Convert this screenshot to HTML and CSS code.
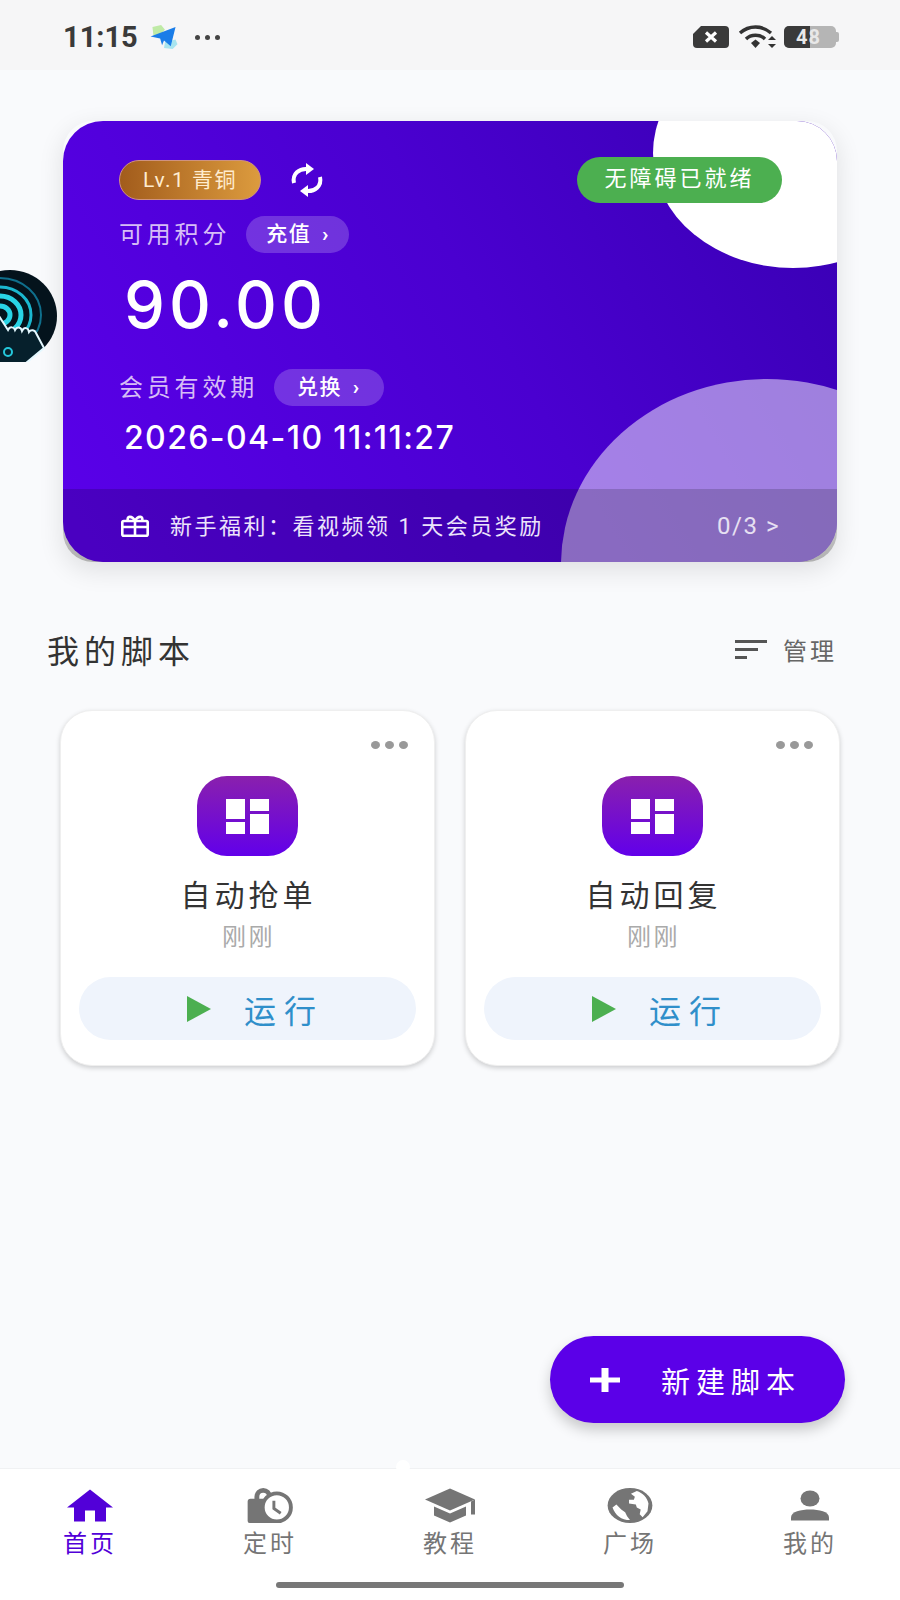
FILE: index.html
```html
<!DOCTYPE html>
<html lang="zh">
<head>
    <meta charset="utf-8">
    <title>我的脚本</title>
    <link rel="stylesheet" href="styles.css">
</head>
<body>

<div class="phone">

    <div class="status-bar">
        <div class="status-left">
            <span class="status-time">11:15</span>
            <svg class="status-app" viewBox="0 0 30 26">
                <path d="M3 2 L12 0 L16 5 L8 13 L4 11 Z" fill="#bfeaa6"/>
                <path d="M16 18 L27 15 L29 20 L24 25 L15 24 Z" fill="#a8e4ef"/>
                <path d="M1 12 L27 2 L22 22 L15 16 L13 21 L11 14 Z" fill="#1a7de8"/>
            </svg>
            <span class="status-dots"><i></i><i></i><i></i></span>
        </div>
        <div class="status-right">
            <svg class="status-sim" viewBox="0 0 36 22">
                <path d="M8 0 H32 A4 4 0 0 1 36 4 V18 A4 4 0 0 1 32 22 H4 A4 4 0 0 1 0 18 V8 Z" fill="#3a3a3a"/>
                <path d="M13 6.500 L23 15.500 M23 6.500 L13 15.500" stroke="#fff" stroke-width="3.200"/>
            </svg>
            <svg class="status-wifi" viewBox="0 0 38 24">
                <path d="M2 8 C11 0 24 0 33 8" fill="none" stroke="#333" stroke-width="3.400"/>
                <path d="M8 14 C13 9 22 9 27 14" fill="none" stroke="#333" stroke-width="3.400"/>
                <path d="M13 18 L17.500 14.500 L22 18 L17.500 23 Z" fill="#333"/>
                <path d="M30 15 L34 11 L38 15 Z M30 19 L34 23 L38 19 Z" fill="#333"/>
            </svg>
            <div class="battery">
                <div class="battery-fill"></div>
                <span class="battery-num">48</span>
                <div class="battery-cap"></div>
            </div>
        </div>
    </div>

    <div class="main">
        <div class="hero-shell">
            <div class="hero">
                <div class="blob blob-white"></div>
                <div class="blob blob-violet"></div>

                <div class="hero-body">
                    <div class="hero-top">
                        <span class="level-pill">Lv.1 青铜</span>
                        <svg class="refresh-icon" viewBox="0 0 36 36" fill="none" stroke="#fff" stroke-width="4">
                            <path d="M5 21 C3 12 10 6 19 7"/>
                            <path d="M31 15 C33 24 26 30 17 29"/>
                            <path d="M17 1 L25 7 L17 13 Z" fill="#fff" stroke="none"/>
                            <path d="M19 23 L11 29 L19 35 Z" fill="#fff" stroke="none"/>
                        </svg>
                        <span class="ready-pill">无障碍已就绪</span>
                    </div>

                    <div class="hero-row hero-row-points">
                        <span class="hero-label">可用积分</span>
                        <span class="hero-action">充值 <b>›</b></span>
                    </div>
                    <div class="points">90.00</div>

                    <div class="hero-row hero-row-vip">
                        <span class="hero-label">会员有效期</span>
                        <span class="hero-action">兑换 <b>›</b></span>
                    </div>
                    <div class="expire">2026-04-10 11:11:27</div>
                </div>

                <div class="welfare">
                    <svg class="gift-icon" viewBox="0 0 28 22" fill="none" stroke="#fff" stroke-width="2.600">
                        <rect x="1.300" y="6" width="25.400" height="14.700" rx="1.500"/>
                        <path d="M1.300 12 H26.700 M14 6 V21"/>
                        <path d="M7 6 C5 1 11 0 14 6 C17 0 23 1 21 6"/>
                    </svg>
                    <span class="welfare-text">新手福利：看视频领 1 天会员奖励</span>
                    <span class="welfare-count">0/3 &gt;</span>
                </div>
            </div>
        </div>

        <div class="section-head">
            <h2>我的脚本</h2>
            <div class="manage">
                <svg class="manage-icon" viewBox="0 0 32 19" fill="#555">
                    <rect x="0" y="0" width="32" height="3"/>
                    <rect x="0" y="8" width="23" height="3"/>
                    <rect x="0" y="16" width="12" height="3"/>
                </svg>
                <span>管理</span>
            </div>
        </div>

        <div class="script-list">
            <div class="script-card">
                <div class="card-more"><i></i><i></i><i></i></div>
                <div class="script-icon">
                    <svg viewBox="0 0 43 35" fill="#fff">
                        <rect x="0" y="0" width="19" height="20"/>
                        <rect x="24" y="0" width="19" height="12"/>
                        <rect x="0" y="23" width="19" height="12"/>
                        <rect x="24" y="15" width="19" height="20"/>
                    </svg>
                </div>
                <div class="script-name">自动抢单</div>
                <div class="script-time">刚刚</div>
                <div class="run-btn">
                    <svg class="play-icon" viewBox="0 0 24 26"><path d="M0 0 L24 13 L0 26 Z" fill="#4caf50"/></svg>
                    <span>运行</span>
                </div>
            </div>
            <div class="script-card">
                <div class="card-more"><i></i><i></i><i></i></div>
                <div class="script-icon">
                    <svg viewBox="0 0 43 35" fill="#fff">
                        <rect x="0" y="0" width="19" height="20"/>
                        <rect x="24" y="0" width="19" height="12"/>
                        <rect x="0" y="23" width="19" height="12"/>
                        <rect x="24" y="15" width="19" height="20"/>
                    </svg>
                </div>
                <div class="script-name">自动回复</div>
                <div class="script-time">刚刚</div>
                <div class="run-btn">
                    <svg class="play-icon" viewBox="0 0 24 26"><path d="M0 0 L24 13 L0 26 Z" fill="#4caf50"/></svg>
                    <span>运行</span>
                </div>
            </div>
        </div>
    </div>

    <div class="tab-bar">
        <div class="tab tab-active">
            <svg class="tab-icon" viewBox="0 0 46 34">
                <path d="M23 1 L46 19 H39 V33 H28 V22 H18 V33 H7 V19 H0 Z" fill="currentColor"/>
            </svg>
            <span>首页</span>
        </div>
        <div class="tab">
            <svg class="tab-icon" viewBox="0 0 46 36">
                <path d="M2 36 A2 2 0 0 1 0 34 V14 A3 3 0 0 1 3 11 H7 V9 A9 9 0 0 1 25 9 V11 H20 V9 A4 4 0 0 0 12 9 V11 H26 V36 Z" fill="currentColor"/>
                <circle cx="30" cy="20" r="14.500" fill="#fff" stroke="currentColor" stroke-width="4"/>
                <path d="M27 13 V21 L34 26" fill="none" stroke="currentColor" stroke-width="3"/>
            </svg>
            <span>定时</span>
        </div>
        <div class="tab">
            <svg class="tab-icon tab-icon-hat" viewBox="0 0 50 34">
                <path d="M25 0 L50 11 L25 22 L0 11 Z" fill="currentColor"/>
                <path d="M9 18 L25 25 L41 18 V27 L25 34 L9 27 Z" fill="currentColor"/>
                <path d="M46 13 L50 11 V26 H46 Z" fill="currentColor"/>
            </svg>
            <span>教程</span>
        </div>
        <div class="tab">
            <svg class="tab-icon" viewBox="0 0 46 36">
                <ellipse cx="23" cy="18" rx="23" ry="18" fill="currentColor"/>
                <path d="M22 12 L27 12 L28 9 L24 6 L30 3 C36 5 41 10 42 16 L41 24 L36 30 L33 27 L34 22 L30 20 L29 17 L22 16 Z" fill="#fff"/>
                <path d="M5 20 L9 17 L14 22 L18 25 L20 29 L23 33 C14 33 8 28 5 20 Z" fill="#fff"/>
            </svg>
            <span>广场</span>
        </div>
        <div class="tab">
            <svg class="tab-icon tab-icon-user" viewBox="0 0 38 30">
                <ellipse cx="19" cy="8" rx="9.500" ry="8" fill="currentColor"/>
                <path d="M0 30 V27 C0 21 10 19 19 19 C28 19 38 21 38 27 V30 Z" fill="currentColor"/>
            </svg>
            <span>我的</span>
        </div>
        <div class="home-bar"></div>
    </div>

    <!-- 悬浮的东西 -->
    <svg class="float-ball" viewBox="0 0 60 92">
        <ellipse cx="10" cy="46" rx="47" ry="46" fill="#04131c"/>
        <g fill="none">
            <ellipse cx="0" cy="45" rx="41" ry="37" stroke="#0f6f8c" stroke-width="2"/>
            <ellipse cx="0" cy="45" rx="31" ry="28" stroke="#1bb8d0" stroke-width="3"/>
            <ellipse cx="0" cy="45" rx="21" ry="19" stroke="#29d4e6" stroke-width="5"/>
            <ellipse cx="0" cy="45" rx="10" ry="9" stroke="#29d4e6" stroke-width="5"/>
        </g>
        <path d="M-5 40 L8 60 C10 56 14 57 15 60 C17 56 21 57 22 61 C24 57 28 57 29 62 C31 59 35 60 36 63 L44 78 L26 93 L-5 93 Z" fill="#06202c" stroke="#e4f8ff" stroke-width="2"/>
        <circle cx="8" cy="82" r="4" fill="none" stroke="#25c8dc" stroke-width="2"/>
    </svg>

    <div class="tab-bump"></div>

    <div class="fab">
        <svg class="fab-plus" viewBox="0 0 30 24"><path d="M0 9.500 H11.500 V0 H18.500 V9.500 H30 V14.500 H18.500 V24 H11.500 V14.500 H0 Z" fill="#fff"/></svg>
        <span>新建脚本</span>
    </div>
</div>

</body>
</html>
```

FILE: styles.css
```css
* {
    box-sizing: border-box;
}
html, body {
    margin: 0;
    padding: 0;
}
body {
    font-family: Roboto, "Noto Sans CJK SC", sans-serif;
    background-color: #f9fafc;
}
.phone {
    position: relative;
    width: 900px;
    height: 1600px;
    overflow: hidden;
    display: flex;
    flex-direction: column;
    background-color: #f9fafc;
}

/* 状态栏 */
.status-bar {
    height: 70px;
    flex-shrink: 0;
    display: flex;
    justify-content: space-between;
    align-items: center;
    padding: 4px 64px 0 63px;
    background-color: #f6f6f7;
}
.status-left, .status-right {
    display: flex;
    align-items: center;
}
.status-time {
    font-size: 29px;
    font-weight: 700;
    letter-spacing: 0;
    color: #3a3a3a;
}
.status-app {
    width: 30px;
    height: 25px;
    margin-left: 11px;
}
.status-dots {
    display: flex;
    gap: 5px;
    margin-left: 16px;
}
.status-dots i {
    width: 5px;
    height: 5px;
    border-radius: 50%;
    background-color: #444;
}
.status-sim {
    width: 36px;
    height: 22px;
}
.status-wifi {
    width: 38px;
    height: 24px;
    margin-left: 9px;
}
.battery {
    position: relative;
    width: 52px;
    height: 22px;
    margin-left: 8px;
    border-radius: 5px;
    background-color: #b5b5b5;
}
.battery-fill {
    width: 26px;
    height: 22px;
    border-radius: 5px 0 0 5px;
    background-color: #3a3a3a;
}
.battery-num {
    position: absolute;
    left: 12px;
    top: 0;
    font-size: 20px;
    line-height: 22px;
    font-weight: 700;
    letter-spacing: 1px;
    color: #e8e8e8;
}
.battery-cap {
    position: absolute;
    right: -3px;
    top: 6px;
    width: 3px;
    height: 10px;
    border-radius: 0 2px 2px 0;
    background-color: #b5b5b5;
}

.main {
    flex: 1;
}

/* 紫色卡片 */
.hero-shell {
    height: 441px;
    margin: 51px 63px 0 63px;
    border-radius: 30px;
    background: linear-gradient(180deg, rgba(170, 170, 170, 0) 70%, #b0b0b0 100%);
    box-shadow: 0 8px 26px rgba(0, 0, 0, 0.11);
}
.hero {
    position: relative;
    height: 441px;
    border-radius: 40px;
    overflow: hidden;
    background: linear-gradient(60deg, #5a00ea 0%, #4a00d0 55%, #3800b2 100%);
}
.blob {
    position: absolute;
    border-radius: 50%;
}
.blob-white {
    left: 590px;
    top: -83px;
    width: 280px;
    height: 230px;
    background-color: #fff;
}
.blob-violet {
    left: 498px;
    top: 258px;
    width: 412px;
    height: 370px;
    background-color: rgba(255, 255, 255, 0.5);
}
.hero-body {
    position: relative;
    height: 368px;
    padding: 36px 55px 0 56px;
}
.hero-top {
    display: flex;
    align-items: center;
}
.level-pill {
    width: 142px;
    height: 40px;
    border-radius: 20px;
    border: 1px solid #cf9280;
    background: linear-gradient(90deg, #a25c1c, #dc9b3e);
    color: #ffeccf;
    font-size: 21px;
    line-height: 38px;
    text-align: center;
    letter-spacing: 1.500px;
}
.refresh-icon {
    width: 36px;
    height: 36px;
    margin-left: 28px;
}
.ready-pill {
    width: 205px;
    height: 46px;
    margin-left: auto;
    border-radius: 23px;
    background-color: #4caf50;
    color: #fff;
    font-size: 22px;
    line-height: 44px;
    text-align: center;
    letter-spacing: 3px;
}
.hero-row {
    display: flex;
    align-items: center;
    height: 37px;
}
.hero-row-points {
    margin-top: 13px;
}
.hero-row-vip {
    margin-top: 32px;
}
.hero-label {
    color: #d6bdf6;
    font-size: 24px;
    line-height: 34px;
    letter-spacing: 3.800px;
}
.hero-action {
    height: 37px;
    padding: 0 19px 0 20px;
    margin-left: 16px;
    border-radius: 19px;
    background-color: rgba(255, 255, 255, 0.2);
    color: #fff;
    font-size: 21px;
    font-weight: 500;
    line-height: 36px;
    letter-spacing: 1.500px;
}
.hero-row-vip .hero-action {
    padding: 0 23px;
}
.hero-action b {
    font-weight: 700;
    margin-left: 4px;
}
.points {
    margin: 20px 0 0 5px;
    font-family: Inter, sans-serif;
    font-size: 65px;
    font-weight: 500;
    line-height: 64px;
    letter-spacing: 4px;
    color: #fff;
}
.expire {
    margin: 13px 0 0 5px;
    font-family: Inter, sans-serif;
    font-size: 32px;
    font-weight: 500;
    line-height: 38px;
    letter-spacing: 1.400px;
    color: #fff;
}
.welfare {
    position: relative;
    height: 73px;
    display: flex;
    align-items: center;
    padding: 0 57px 0 58px;
    background-color: rgba(0, 0, 0, 0.17);
}
.gift-icon {
    width: 28px;
    height: 22px;
    margin-right: 21px;
}
.welfare-text {
    margin-top: -3px;
    font-size: 22px;
    letter-spacing: 2.500px;
    color: #ece4fb;
}
.welfare-count {
    margin-left: auto;
    font-size: 24px;
    letter-spacing: 1.500px;
    color: #e6e0f2;
}

/* 我的脚本 */
.section-head {
    display: flex;
    justify-content: space-between;
    align-items: center;
    height: 40px;
    margin: 67px 63px 0 47px;
}
.section-head h2 {
    margin: 0;
    font-size: 32px;
    font-weight: 400;
    letter-spacing: 5px;
    color: #333;
}
.manage {
    display: flex;
    align-items: center;
    color: #666;
    font-size: 24px;
    letter-spacing: 3px;
}
.manage-icon {
    width: 32px;
    height: 19px;
    margin-right: 16px;
}
.script-list {
    display: grid;
    grid-template-columns: 375px 375px;
    gap: 30px;
    margin: 41px 0 0 60px;
}
.script-card {
    position: relative;
    height: 356px;
    padding-top: 65px;
    border-radius: 32px;
    background-color: #fff;
    border: 1px solid #efefef;
    box-shadow: 0 2px 5px rgba(0, 0, 0, 0.18);
    text-align: center;
}
.card-more {
    position: absolute;
    right: 26px;
    top: 30px;
    display: flex;
    gap: 5px;
}
.card-more i {
    width: 9px;
    height: 8px;
    border-radius: 50%;
    background-color: #999;
}
.script-icon {
    width: 101px;
    height: 80px;
    margin: 0 auto;
    display: flex;
    align-items: center;
    justify-content: center;
    border-radius: 30px;
    background: linear-gradient(180deg, #8a20ad, #6200ea);
}
.script-icon svg {
    width: 43px;
    height: 35px;
}
.script-name {
    margin-top: 20px;
    padding-left: 2px;
    font-size: 30px;
    line-height: 40px;
    letter-spacing: 4px;
    color: #333;
}
.script-time {
    margin-top: 6px;
    padding-left: 2px;
    font-size: 24px;
    line-height: 30px;
    letter-spacing: 2.500px;
    color: #aaa;
}
.run-btn {
    display: flex;
    align-items: center;
    justify-content: center;
    height: 63px;
    margin: 25px 18px 0 18px;
    padding-left: 16px;
    border-radius: 32px;
    background-color: #eff4fc;
    color: #2f8fca;
    font-size: 32px;
    letter-spacing: 8px;
}
.play-icon {
    width: 24px;
    height: 26px;
    margin-right: 33px;
}

/* 悬浮按钮 */
.fab {
    position: absolute;
    left: 550px;
    top: 1336px;
    width: 295px;
    height: 87px;
    display: flex;
    align-items: center;
    padding-left: 40px;
    border-radius: 44px;
    background-color: #5b00e8;
    box-shadow: 0 7px 14px rgba(0, 0, 0, 0.2);
    color: #fff;
    font-size: 29px;
    letter-spacing: 6px;
}
.fab-plus {
    width: 30px;
    height: 24px;
    margin-right: 41px;
}
.float-ball {
    position: absolute;
    left: 0;
    top: 270px;
    width: 60px;
    height: 92px;
}

/* 底部导航 */
.tab-bar {
    position: relative;
    height: 132px;
    flex-shrink: 0;
    display: grid;
    grid-template-columns: repeat(5, 180px);
    padding-top: 19px;
    background-color: #fff;
    border-top: 1px solid #f0f1f3;
}
.tab {
    display: flex;
    flex-direction: column;
    align-items: center;
    color: #757575;
    font-size: 24px;
    letter-spacing: 3px;
}
.tab span {
    margin-top: 5px;
    line-height: 32px;
}
.tab-active {
    color: #5200d8;
}
.tab-icon {
    width: 46px;
    height: 35px;
}
.tab-icon-hat {
    width: 50px;
}
.tab-icon-user {
    width: 38px;
}
.home-bar {
    position: absolute;
    left: 276px;
    top: 113px;
    width: 348px;
    height: 6px;
    border-radius: 3px;
    background-color: #777;
}
.tab-bump {
    position: absolute;
    left: 396px;
    top: 1460px;
    width: 14px;
    height: 14px;
    border-radius: 50%;
    background-color: #fff;
}
```
